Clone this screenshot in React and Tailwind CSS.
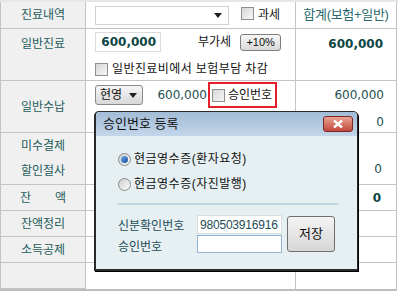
import React from 'react';

const font = "font-['Liberation_Sans','Noto_Sans_CJK_KR',sans-serif]";
const numFont = "font-['DejaVu_Sans','Noto_Sans_CJK_KR',sans-serif]";

const CheckBox = () => (
  <span className="inline-block w-[13px] h-[13px] border border-[#8f8f8f] bg-gradient-to-br from-[#d6d6d6] to-[#f8f8f8] shrink-0" />
);

const Radio = ({ checked }) => (
  <span className="w-[13px] h-[13px] rounded-full border border-[#8a8a8a] bg-gradient-to-br from-[#d0d0d0] to-[#fafafa] flex items-center justify-center shrink-0">
    {checked && <span className="w-[7px] h-[7px] rounded-full bg-gradient-to-br from-[#6aa6e8] to-[#1750a0]" />}
  </span>
);

const Label = ({ children, className = "" }) => (
  <div className={`bg-[#f0f0f0] border-r border-b border-[#c4c4c4] flex flex-col items-center justify-center text-[12px] text-[#1d5c5c] ${className}`}>
    {children}
  </div>
);

const App = () => {
  return (
    <div className={`relative w-[398px] h-[292px] bg-white overflow-hidden ${font}`}>
      <div className="h-[2px] bg-[#e4e8ea]" />
      <div className="grid grid-cols-[85px_210px_101px] grid-rows-[27px_52px_52px_52px_26px_26px_26px_26px] border-l border-[#c4c4c4] border-b-2 border-b-[#bdbdbd] w-[397px]">
        {/* row 1 */}
        <Label>진료내역</Label>
        <div className="border-r border-b border-[#c4c4c4] flex items-center pl-[9px]">
          <div className="w-[134px] h-[19px] border border-[#d2d2d2] bg-white flex items-center justify-end pr-[6px]">
            <svg width="8" height="5" viewBox="0 0 8 5"><path d="M0 0h8L4 5z" fill="#222" /></svg>
          </div>
          <span className="ml-[12px]"><CheckBox /></span>
          <span className="ml-[4px] text-[12px] text-[#111]">과세</span>
        </div>
        <div className="border-r border-b border-[#c4c4c4] flex items-center justify-center text-[13px] tracking-[-0.3px] text-[#2a6a6e] whitespace-nowrap">합계(보험+일반)</div>

        {/* row 2 */}
        <Label>
          <span className="-mt-[22px]">일반진료</span>
        </Label>
        <div className="border-r border-b border-[#c4c4c4] pl-[9px] pt-[3px]">
          <div className="flex items-center h-[20px]">
            <div className={`w-[66px] h-[20px] border border-[#dcdcdc] flex items-center justify-end pr-[4px] text-[12px] font-bold text-[#0d4545] ${numFont}`}>600,000</div>
            <span className="ml-[37px] text-[12px] text-[#111]">부가세</span>
            <button className="ml-[9px] w-[41px] h-[17px] rounded-[3px] border border-[#7f7f7f] bg-gradient-to-b from-[#f7f7f7] to-[#d9d9d9] text-[11px] leading-none text-[#111] flex items-center justify-center">+10%</button>
          </div>
          <div className="flex items-center mt-[8px]">
            <CheckBox />
            <span className="ml-[4px] text-[12px] text-[#111] tracking-[0.4px]">일반진료비에서 보험부담 차감</span>
          </div>
        </div>
        <div className="border-r border-b border-[#c4c4c4] flex justify-end pr-[13px] pt-[6px]">
          <span className={`text-[12px] font-bold text-[#0d4545] ${numFont}`}>600,000</span>
        </div>

        {/* row 3 */}
        <Label>일반수납</Label>
        <div className="border-r border-b border-[#c4c4c4] pl-[9px] pt-[1px]">
          <div className="flex items-center h-[26px]">
            <div className="w-[48px] h-[20px] rounded-[3px] border border-[#8a8a8a] bg-gradient-to-b from-[#f6f6f6] to-[#d8d8d8] flex items-center pl-[4px] text-[12px] text-[#111]">
              현영
              <svg className="ml-[7px]" width="8" height="5" viewBox="0 0 8 5"><path d="M0 0h8L4 5z" fill="#222" /></svg>
            </div>
            <div className={`w-[65px] h-[20px] bg-white flex items-center justify-end pr-[1px] text-[12px] text-[#1d5050] ${numFont}`}>600,000</div>
            <div className="w-[69px] h-[26px] border-2 border-[#e5202a] flex items-center pl-[2px] whitespace-nowrap">
              <CheckBox />
              <span className="ml-[3px] text-[12px] text-[#111]">승인번호</span>
            </div>
          </div>
        </div>
        <div className="border-r border-b border-[#c4c4c4] flex flex-col items-end pr-[12px] pt-[5px] gap-[9px]">
          <span className={`text-[12px] text-[#1d5050] ${numFont}`}>600,000</span>
          <span className={`text-[12px] text-[#1d5050] ${numFont}`}>0</span>
        </div>

        {/* row 4 */}
        <Label className="justify-start">
          <span className="h-[26px] flex items-center">미수결제</span>
          <span className="h-[26px] flex items-center">할인절사</span>
        </Label>
        <div className="border-r border-b border-[#c4c4c4]" />
        <div className="border-r border-b border-[#c4c4c4] flex justify-end items-end pr-[14px] pb-[6px]">
          <span className={`text-[12px] text-[#1d5050] ${numFont}`}>0</span>
        </div>

        {/* row 5 */}
        <Label>
          <span className="flex w-[46px] justify-between"><span>잔</span><span>액</span></span>
        </Label>
        <div className="border-r border-b border-[#c4c4c4]" />
        <div className="border-r border-b border-[#c4c4c4] flex items-center justify-end pr-[15px]">
          <span className={`text-[12px] font-bold text-[#0d4545] ${numFont}`}>0</span>
        </div>

        {/* rows 6-8 */}
        <Label>잔액정리</Label>
        <div className="border-r border-b border-[#c4c4c4]" />
        <div className="border-r border-b border-[#c4c4c4]" />
        <Label>소득공제</Label>
        <div className="border-r border-b border-[#c4c4c4]" />
        <div className="border-r border-b border-[#c4c4c4]" />
        <Label />
        <div className="border-r border-[#c4c4c4]" />
        <div className="border-r border-[#c4c4c4]" />
      </div>

      {/* dialog */}
      <div className="absolute left-[94px] top-[111px] w-[264px] h-[160px] rounded-t-[5px] border border-[#2a2a2a] border-b-2 border-l-2 bg-[#e6eff2] shadow-[1px_1px_0_#000] flex flex-col">
        <div className="h-[24px] rounded-t-[4px] bg-gradient-to-b from-[#a3bcd6] to-[#c3d6ea] flex items-center justify-between pl-[7px] pr-[4px]">
          <span className="text-[13px] text-[#111]">승인번호 등록</span>
          <div className="w-[30px] h-[16px] rounded-[3px] border border-[#7a2a22] bg-gradient-to-b from-[#e9a394] to-[#c1463b] flex items-center justify-center">
            <svg width="10" height="8" viewBox="0 0 10 8"><path d="M1 0.5L9 7.5M9 0.5L1 7.5" stroke="#fff" strokeWidth="2.4" /></svg>
          </div>
        </div>
        <div className="flex-1 pl-[22px] pr-[20px] pt-[16px] text-[12px] text-[#1d4c58]">
          <div className="flex items-center gap-[3px] h-[14px]">
            <Radio checked />
            <span className="text-[#111] tracking-[0.5px]">현금영수증(환자요청)</span>
          </div>
          <div className="flex items-center gap-[3px] h-[14px] mt-[11px]">
            <Radio />
            <span className="text-[#111] tracking-[0.5px]">현금영수증(자진발행)</span>
          </div>
          <div className="h-[2px] bg-[#b9d9dc] mt-[12px] w-[220px]" />
          <div className="flex mt-[10px]">
            <div className="flex flex-col w-[79px] pt-[2px] gap-[3px]">
              <span>신분확인번호</span>
              <span>승인번호</span>
            </div>
            <div className="flex flex-col gap-[1px]">
              <div className="w-[85px] h-[19px] bg-white border border-[#dcdcdc] flex items-center pl-[2px] text-[12px] text-[#1d4c58] tracking-[-0.2px]">980503916916</div>
              <div className="w-[85px] h-[18px] bg-white border border-[#8fb4d6]" />
            </div>
            <button className="ml-[5px] mt-[1px] w-[48px] h-[36px] rounded-[3px] border border-[#707070] bg-gradient-to-b from-[#f4f4f4] to-[#d6d6d6] text-[13px] text-[#111] flex items-center justify-center">저장</button>
          </div>
        </div>
      </div>
    </div>
  );
};

export default App;
